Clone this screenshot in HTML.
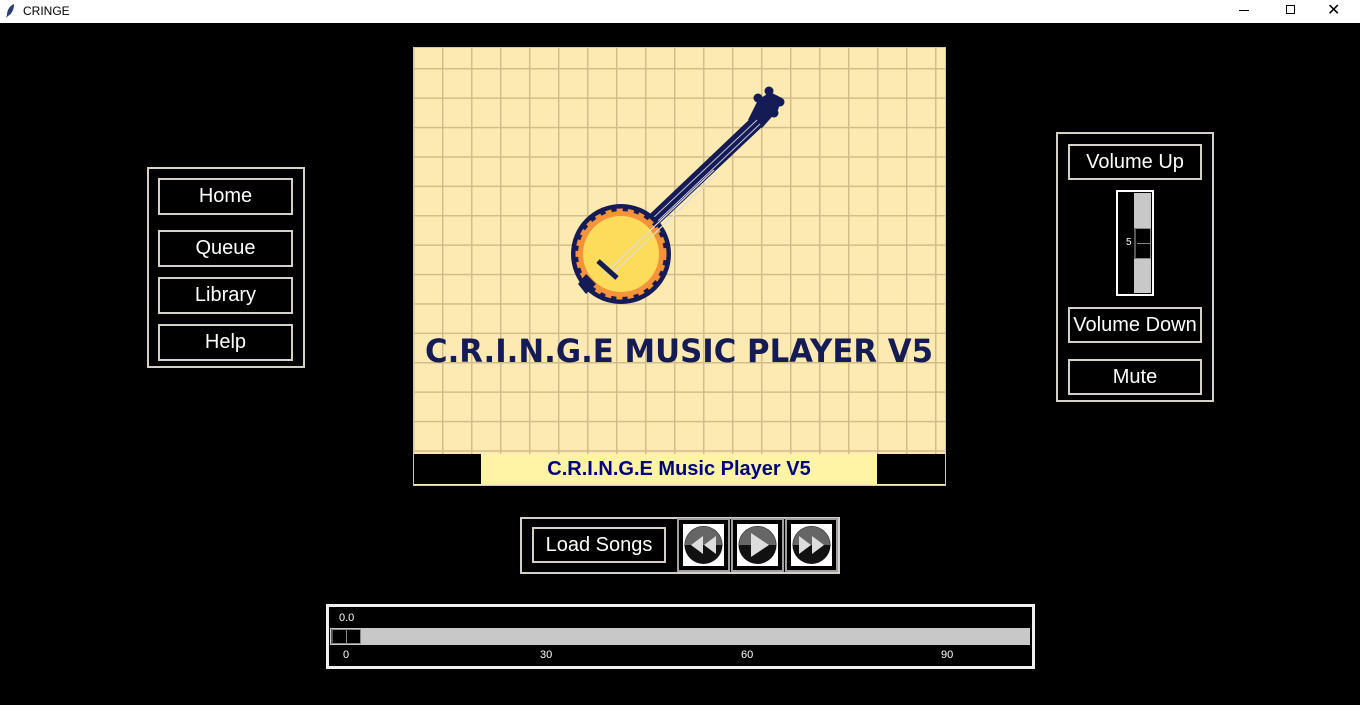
<!DOCTYPE html>
<html><head><style>
body{margin:0;width:1360px;height:705px;background:#000;position:relative;overflow:hidden;font-family:"Liberation Sans",Arial,sans-serif}
.a{position:absolute;box-sizing:border-box}
.fr{border:2px solid #d4d0c8}
.btn{position:absolute;box-sizing:border-box;border:2px solid #d4d0c8;color:#fff;font-size:20px;display:flex;align-items:center;justify-content:center}
.ib{position:absolute;box-sizing:border-box;border:2px solid #a0a0a0;background:#000;top:518px;width:53px;height:54px}
.ib svg{position:absolute;left:4px;top:4px}
.sm{position:absolute;color:#fff;font-size:11px}
</style></head><body>
<div class="a" style="left:0;top:0;width:1360px;height:23px;background:#fff"></div>
<svg class="a" style="left:4px;top:3px" width="12" height="16" viewBox="0 0 12 16"><path d="M10 1 C5 3 3 8 3 12 L2 15 L4 13 C8 11 10 6 10 1Z" fill="#2a3f70"/></svg>
<div class="a" style="left:23px;top:4px;font-size:12px;color:#000">CRINGE</div>
<div class="a" style="left:1239px;top:10px;width:10px;height:1px;background:#000"></div>
<div class="a" style="left:1286px;top:5px;width:9px;height:9px;border:1px solid #000"></div>
<div class="a" style="left:1327px;top:0;font-size:16px;color:#000">✕</div>

<div class="a fr" style="left:147px;top:167px;width:158px;height:201px"></div>
<div class="btn" style="left:158px;top:178px;width:135px;height:37px">Home</div>
<div class="btn" style="left:158px;top:230px;width:135px;height:37px">Queue</div>
<div class="btn" style="left:158px;top:277px;width:135px;height:37px">Library</div>
<div class="btn" style="left:158px;top:324px;width:135px;height:37px">Help</div>

<div class="a" style="left:413px;top:47px;width:533px;height:439px;border:1px solid #c8c8c8;background:#fdeab3"></div>
<svg class="a" style="left:414px;top:48px" width="531" height="406">
<defs><pattern id="g" x="28" y="20" width="29" height="29.4" patternUnits="userSpaceOnUse"><path d="M0.5 0V30M0 0.5H30" stroke="#d2bd8a" stroke-width="2" fill="none"/></pattern></defs>
<rect width="531" height="406" fill="url(#g)"/>
<polygon points="198,202 208,211 349,78 339,68" fill="#141b55"/>
<path d="M334 72 L344 52 L356 44 L368 50 L364 62 L348 80Z" fill="#141b55"/>
<circle cx="344" cy="50" r="4.5" fill="#141b55"/><circle cx="355" cy="43" r="4.5" fill="#141b55"/><circle cx="366" cy="54" r="4.5" fill="#141b55"/><circle cx="360" cy="65" r="4.5" fill="#141b55"/>
<line x1="203" y1="204" x2="343" y2="72" stroke="#c8c8d8" stroke-width="1"/>
<line x1="207" y1="208" x2="346" y2="76" stroke="#c8c8d8" stroke-width="1"/>
<circle cx="207" cy="206" r="50" fill="#141b55"/>
<circle cx="207" cy="206" r="43" fill="#f6923a" stroke="#f6923a" stroke-width="5" stroke-dasharray="6 5"/>
<circle cx="207" cy="206" r="38" fill="#fddc5c"/>
<line x1="190" y1="226" x2="300" y2="122" stroke="#ddd" stroke-width="1.2"/>
<line x1="194" y1="230" x2="303" y2="126" stroke="#ddd" stroke-width="1.2"/>
<line x1="184" y1="213" x2="203" y2="230" stroke="#141b55" stroke-width="5"/>
<path d="M172 226 L182 236 L172 246 L164 236Z" fill="#141b55"/>
<text x="265" y="314" text-anchor="middle" font-family="'DejaVu Sans','Liberation Sans',sans-serif" font-weight="bold" font-size="32" fill="#141b55" textLength="508" lengthAdjust="spacingAndGlyphs">C.R.I.N.G.E MUSIC PLAYER V5</text>
</svg>
<div class="a" style="left:414px;top:454px;width:531px;height:30px;background:#000"></div>
<div class="a" style="left:481px;top:454px;width:396px;height:30px;background:#fff3a6;color:#00007f;font-weight:bold;font-size:20px;text-align:center;line-height:30px">C.R.I.N.G.E Music Player V5</div>

<div class="a fr" style="left:1056px;top:132px;width:158px;height:270px"></div>
<div class="btn" style="left:1068px;top:144px;width:134px;height:36px">Volume Up</div>
<div class="a" style="left:1116px;top:190px;width:38px;height:106px;border:2px solid #fff"></div>
<div class="a" style="left:1134px;top:193px;width:17px;height:100px;background:#c8c8c8"></div>
<div class="a" style="left:1134px;top:228px;width:17px;height:31px;background:#000;border:1px solid #888;border-left:2px solid #555"></div>
<div class="a" style="left:1137px;top:243px;width:13px;height:1px;background:#888"></div>
<div class="sm" style="left:1126px;top:237px;font-size:10px">5</div>
<div class="btn" style="left:1068px;top:307px;width:134px;height:36px">Volume Down</div>
<div class="btn" style="left:1068px;top:359px;width:134px;height:36px">Mute</div>

<div class="a fr" style="left:520px;top:517px;width:320px;height:57px"></div>
<div class="btn" style="left:532px;top:527px;width:134px;height:36px">Load Songs</div>
<div class="ib" style="left:677px"><svg width="41" height="42" viewBox="0 0 41 42"><rect width="41" height="42" fill="#fff"/><circle cx="20.5" cy="21" r="19" fill="#111"/><path d="M2 21A18.5 18.5 0 0 1 39 21Z" fill="#666"/><path d="M20 12 L8 21 L20 30Z M33 12 L21 21 L33 30Z" fill="#ddd"/></svg></div>
<div class="ib" style="left:731px"><svg width="41" height="42" viewBox="0 0 41 42"><rect width="41" height="42" fill="#fff"/><circle cx="20.5" cy="21" r="19" fill="#111"/><path d="M2 21A18.5 18.5 0 0 1 39 21Z" fill="#666"/><path d="M14 9 L32 21 L14 33Z" fill="#ddd"/></svg></div>
<div class="ib" style="left:785px"><svg width="41" height="42" viewBox="0 0 41 42"><rect width="41" height="42" fill="#fff"/><circle cx="20.5" cy="21" r="19" fill="#111"/><path d="M2 21A18.5 18.5 0 0 1 39 21Z" fill="#666"/><path d="M8 12 L20 21 L8 30Z M21 12 L33 21 L21 30Z" fill="#ddd"/></svg></div>

<div class="a" style="left:326px;top:604px;width:709px;height:65px;border:3px solid #f0f0f0"></div>
<div class="sm" style="left:339px;top:612px">0.0</div>
<div class="a" style="left:330px;top:628px;width:700px;height:17px;background:#c8c8c8"></div>
<div class="a" style="left:331px;top:629px;width:30px;height:15px;background:#000;border:1px solid #888;border-left:2px solid #555"></div>
<div class="a" style="left:346px;top:630px;width:1px;height:13px;background:#888"></div>
<div class="sm" style="left:343px;top:649px">0</div>
<div class="sm" style="left:540px;top:649px">30</div>
<div class="sm" style="left:741px;top:649px">60</div>
<div class="sm" style="left:941px;top:649px">90</div>
</body></html>
